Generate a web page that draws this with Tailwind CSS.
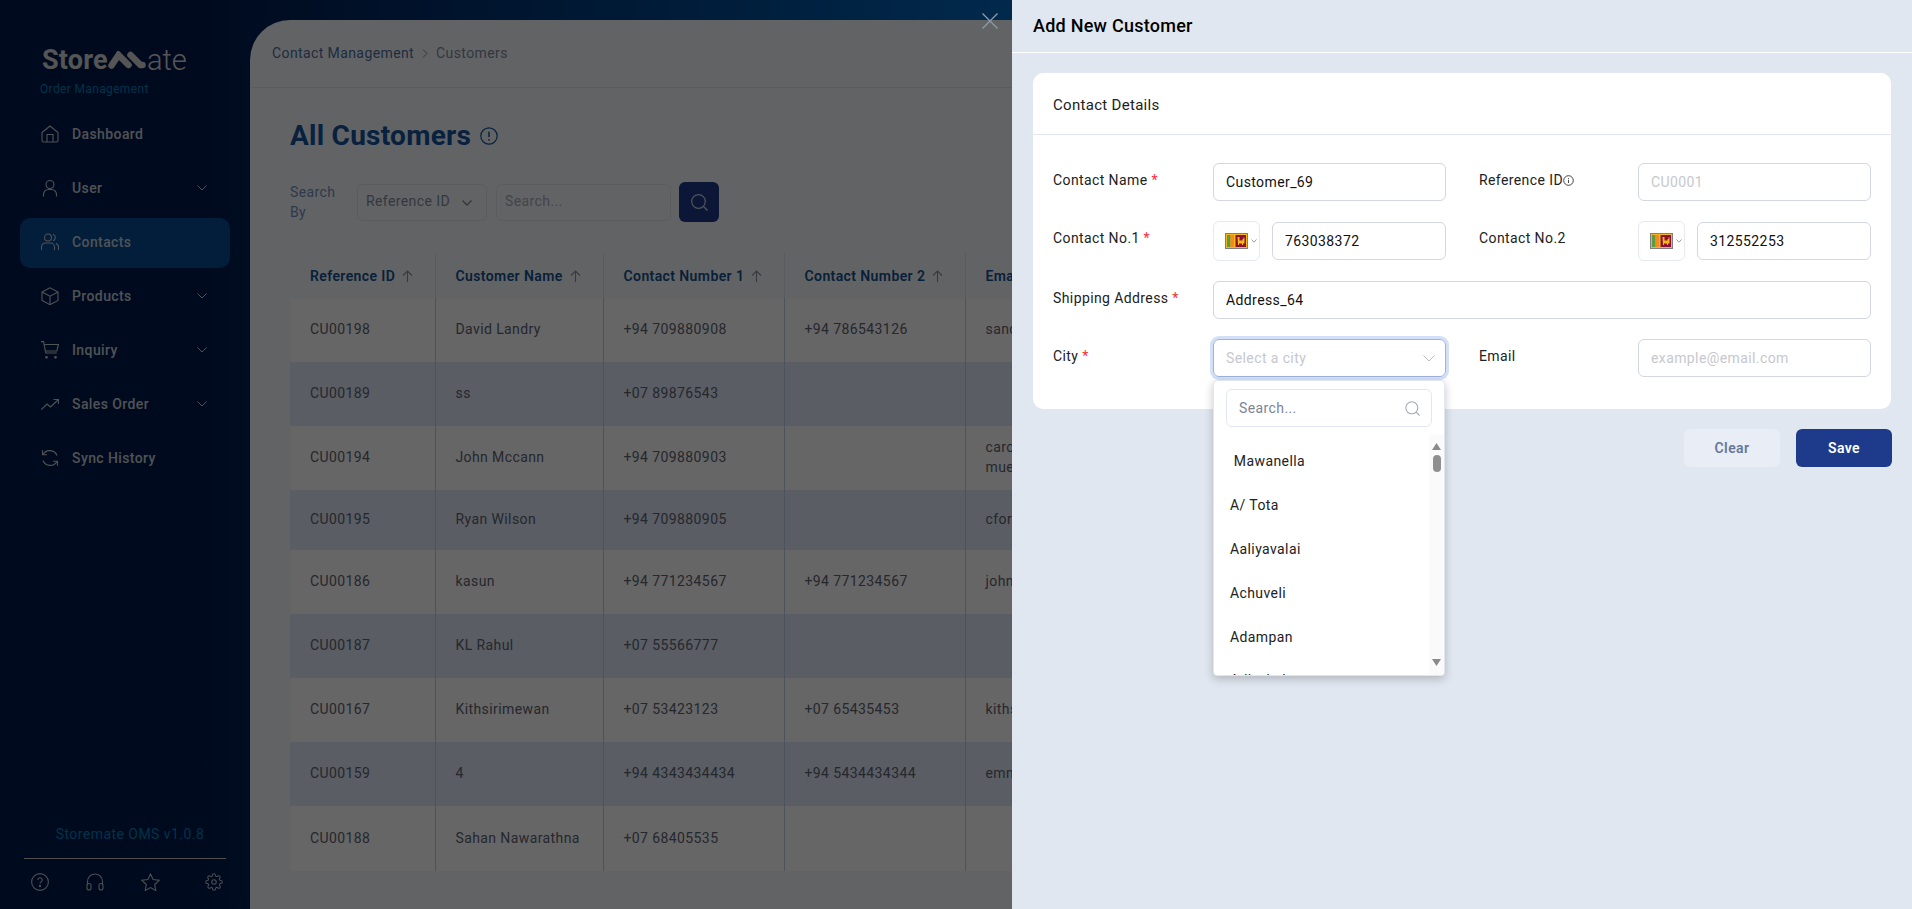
<!DOCTYPE html>
<html lang="en">

<head>
    <meta charset="UTF-8">
    <meta name="viewport" content="width=device-width, initial-scale=1.0">
    <title>Storemate OMS - Customers</title>
    <script src="https://cdn.jsdelivr.net/npm/@tailwindcss/browser@4"></script>
</head>

<body class="font-['Roboto',sans-serif] text-sm tracking-[0.4px]">
    <div class="relative w-[1912px] h-[909px] overflow-hidden bg-linear-to-r from-[#001a4c] from-[10%] to-[#0568c0] to-[53%] flex">

        <!-- sidebar -->
        <aside class="w-[250px] shrink-0 h-full flex flex-col text-[#c9cdd4] font-medium">
            <div class="pl-[42px] pt-[44px] h-[110px]">
                <div class="flex items-center h-[32px] text-[#d4d5d8]">
                    <span class="text-[27px] font-bold tracking-[0.2px] leading-none">Store</span>
                    <svg class="w-[38px] h-[18px] shrink-0" viewBox="0 0 38 18" fill="none" stroke="#d4d5d8" stroke-linecap="round" stroke-width="6.500">
                        <path d="M3.500 14.500 L10.500 4 L20.500 14" />
                        <path d="M22.500 4 L32.500 14 L34.500 14" />
                    </svg>
                    <span class="text-[29px] font-light tracking-normal leading-none ml-px">ate</span>
                </div>
                <div class="-ml-0.5 mt-[5px] text-xs font-normal text-[#007fb8] tracking-[0.35px]">Order Management</div>
            </div>
            <nav class="px-5 flex flex-col gap-[4px]">
                <a class="h-[50px] flex items-center pl-[21px] pr-[23px] pb-[2px] gap-[13px]">
                    <svg class="w-[18px] h-[18px]" viewBox="0 0 18 18" fill="none" stroke="currentColor" stroke-width="1.1"><path d="M1 7.500 9 1l8 6.500V15.500a1.500 1.500 0 0 1-1.500 1.500h-13A1.500 1.500 0 0 1 1 15.500Z" /><path d="M6 17v-7.500h6V17" /></svg>
                    <span>Dashboard</span>
                </a>
                <a class="h-[50px] flex items-center pl-[21px] pr-[23px] pb-[2px] gap-[13px]">
                    <svg class="w-[18px] h-[18px]" viewBox="0 0 18 18" fill="none" stroke="currentColor" stroke-width="1.1"><circle cx="9" cy="5.500" r="4" /><path d="M2.500 17.500v-2a5 5 0 0 1 5-5h3a5 5 0 0 1 5 5v2" /></svg>
                    <span>User</span>
                    <svg class="ml-auto w-[10px] h-[6px]" viewBox="0 0 10 6" fill="none" stroke="currentColor" stroke-width="1"><path d="M.5.500 5 5 9.500.500" /></svg>
                </a>
                <a class="h-[50px] flex items-center pl-[21px] pr-[23px] pb-[2px] gap-[13px] bg-[#054b94] rounded-[10px]">
                    <svg class="w-[18px] h-[18px]" viewBox="0 0 18 18" fill="none" stroke="currentColor" stroke-width="1.1"><circle cx="7" cy="4.500" r="3.500" /><path d="M.5 17v-3a4 4 0 0 1 4-4h5a4 4 0 0 1 4 4v3" /><path d="M12 1.200a3.500 3.500 0 0 1 0 6.600M15 10.500a4 4 0 0 1 2.500 3.500v3" /></svg>
                    <span>Contacts</span>
                </a>
                <a class="h-[50px] flex items-center pl-[21px] pr-[23px] pb-[2px] gap-[13px]">
                    <svg class="w-[18px] h-[18px]" viewBox="0 0 18 18" fill="none" stroke="currentColor" stroke-width="1.1"><path d="M9 .8 1 5v8.500l8 4.200 8-4.200V5Z" /><path d="M1 5l8 4.200L17 5M9 9.200v8.500" /></svg>
                    <span>Products</span>
                    <svg class="ml-auto w-[10px] h-[6px]" viewBox="0 0 10 6" fill="none" stroke="currentColor" stroke-width="1"><path d="M.5.500 5 5 9.500.500" /></svg>
                </a>
                <a class="h-[50px] flex items-center pl-[21px] pr-[23px] pb-[2px] gap-[13px]">
                    <svg class="w-[18px] h-[18px]" viewBox="0 0 18 18" fill="none" stroke="currentColor" stroke-width="1.1"><path d="M0 .6h2.500l2.300 11.400h11" /><path d="M3.200 3.500h14.300l-1.700 6.500H4.400" /><circle cx="5.500" cy="16.300" r=".8" fill="currentColor" /><circle cx="14.500" cy="16.300" r=".8" fill="currentColor" /></svg>
                    <span>Inquiry</span>
                    <svg class="ml-auto w-[10px] h-[6px]" viewBox="0 0 10 6" fill="none" stroke="currentColor" stroke-width="1"><path d="M.5.500 5 5 9.500.500" /></svg>
                </a>
                <a class="h-[50px] flex items-center pl-[21px] pr-[23px] pb-[2px] gap-[13px]">
                    <svg class="w-[18px] h-[18px]" viewBox="0 0 18 18" fill="none" stroke="currentColor" stroke-width="1.1"><path d="M.3 14.500 6 9l3.500 3L17.500 4.500" /><path d="M12.500 4.500h5v4.500" /></svg>
                    <span>Sales Order</span>
                    <svg class="ml-auto w-[10px] h-[6px]" viewBox="0 0 10 6" fill="none" stroke="currentColor" stroke-width="1"><path d="M.5.500 5 5 9.500.500" /></svg>
                </a>
                <a class="h-[50px] flex items-center pl-[21px] pr-[23px] pb-[2px] gap-[13px]">
                    <svg class="w-[18px] h-[18px]" viewBox="0 0 18 18" fill="none" stroke="currentColor" stroke-width="1.1"><path d="M2 5.500A7.800 7.800 0 0 1 16 6.500" /><path d="M1.500 1.200v4.500h4.500" /><path d="M16 12.500A7.800 7.800 0 0 1 2 11.500" /><path d="M16.500 16.800v-4.500H12" /></svg>
                    <span>Sync History</span>
                </a>
            </nav>
            <div class="mt-auto">
                <div class="text-center pl-[10px] text-[#007fb8] font-normal tracking-[0.45px] mb-[14px] leading-5">Storemate OMS v1.0.8</div>
                <div class="mx-[24px] border-t border-[#c8c8c8]"></div>
                <div class="flex items-center h-[50px] pl-[31px] text-[#c0c3c8] pb-[5px]">
                    <svg class="w-[18px] h-[18px] mr-[37px]" viewBox="0 0 18 18" fill="none" stroke="currentColor" stroke-width="1.1"><circle cx="9" cy="9" r="8.400" /><path d="M6.800 7a2.200 2.200 0 1 1 3.300 1.900c-.7.400-1.100.9-1.100 1.700" /><circle cx="9" cy="13" r=".6" fill="currentColor" /></svg>
                    <svg class="w-[18px] h-[18px] mr-[37px]" viewBox="0 0 18 18" fill="none" stroke="currentColor" stroke-width="1.1"><path d="M1.500 12V8.500a7.500 7.500 0 0 1 15 0V12" /><rect x="1" y="10.500" width="4" height="6.500" rx="2" /><rect x="13" y="10.500" width="4" height="6.500" rx="2" /></svg>
                    <svg class="w-[19px] h-[18px] mr-[45px]" viewBox="0 0 19 18" fill="none" stroke="currentColor" stroke-width="1.1"><path d="M9.500 1l2.600 5.500 6 .8-4.400 4.200 1.100 6-5.300-2.900-5.300 2.900 1.100-6L.9 7.300l6-.8Z" /></svg>
                    <svg class="w-[18px] h-[18px]" viewBox="0 0 24 24" fill="none" stroke="currentColor" stroke-width="1.400"><circle cx="12" cy="12" r="3" /><path d="M19.400 15a1.650 1.650 0 0 0 .33 1.820l.06.060a2 2 0 1 1-2.830 2.830l-.06-.060a1.650 1.650 0 0 0-2.800 1.170V21a2 2 0 0 1-4 0v-.090a1.650 1.650 0 0 0-2.800-1.170l-.06.060a2 2 0 1 1-2.830-2.830l.06-.060a1.650 1.650 0 0 0-1.170-2.800H3a2 2 0 0 1 0-4h.090a1.650 1.650 0 0 0 1.170-2.800l-.06-.060a2 2 0 1 1 2.830-2.830l.06.060a1.650 1.650 0 0 0 2.800-1.170V3a2 2 0 0 1 4 0v.090a1.650 1.650 0 0 0 2.800 1.170l.06-.060a2 2 0 1 1 2.830 2.830l-.06.060a1.650 1.650 0 0 0 1.170 2.800H21a2 2 0 0 1 0 4h-.090a1.650 1.650 0 0 0-1.510 1Z" /></svg>
                </div>
            </div>
        </aside>

        <!-- main content -->
        <main class="flex-1 mt-5 bg-[#f5f8fc] rounded-tl-[40px] overflow-hidden">
            <div class="pl-[22px] ml-px h-[68px] border-b border-[#e3e6ea] flex items-center pb-px gap-[8px]">
                <span class="-ml-px text-[#4f6f9f]">Contact Management</span>
                <svg class="w-[6px] h-[9px]" viewBox="0 0 6 9" fill="none" stroke="#7f8ea5" stroke-width="1"><path d="M1 .5 5 4.500 1 8.500" /></svg>
                <span class="text-[#7d8ca2]">Customers</span>
            </div>
            <div class="pl-[40px]">
                <div class="flex items-center gap-[9px] mt-[28px] h-[40px]">
                    <h1 class="text-[28px] font-bold text-[#12539c] tracking-[0.25px]">All Customers</h1>
                    <svg class="w-[18px] h-[18px]" viewBox="0 0 18 18" fill="none" stroke="#12539c" stroke-width="1.200"><circle cx="9" cy="9" r="8.200" /><path d="M9 4.800v5.200" stroke-width="1.500" /><circle cx="9" cy="12.800" r=".9" fill="#12539c" stroke="none" /></svg>
                </div>
                <div class="flex items-center mt-[26px] h-[40px]">
                    <span class="w-[67px] text-[#7290bd] leading-5">Search<br>By</span>
                    <div class="w-[130px] h-[37px] border border-[#e2e6ec] rounded-[6px] flex items-center pl-[8px] pr-[14px] pb-[2px] justify-between text-[#838d9c]">
                        <span>Reference ID</span>
                        <svg class="w-[10px] h-[6px] mt-[3px]" viewBox="0 0 10 6" fill="none" stroke="#7f8894" stroke-width="1.400"><path d="M.5.500 5 5 9.500.500" /></svg>
                    </div>
                    <div class="ml-[9px] w-[175px] h-[37px] border border-[#e2e6ec] rounded-[6px] flex items-center pl-[8px] pb-[2px] text-[#a4adba]">Search...</div>
                    <button class="ml-[8px] w-[40px] h-[40px] bg-[#1e3a8a] rounded-[6px] flex items-center justify-center">
                        <svg class="w-[17px] h-[17px]" viewBox="0 0 17 17" fill="none" stroke="#c9d3e6" stroke-width="1.200"><circle cx="7.500" cy="7.500" r="6.800" /><path d="m12.500 12.500 4 4" /></svg>
                    </button>
                </div>
                <table class="mt-[31px] border-collapse table-fixed w-[900px] text-[#5c6472]">
                    <thead class="text-[#14508f] text-left">
                        <tr class="h-[45px] [&>th]:pl-5 [&>th]:border-r [&>th]:border-[#dde4ee] [&>th]:font-semibold">
                            <th class="w-[145px]"><span class="flex items-center gap-[7px]">Reference ID <svg class="w-[11px] h-[12px]" viewBox="0 0 11 12" fill="none" stroke="#8a9098" stroke-width="1.100"><path d="M5.500 12V1M1 5.500 5.500 1 10 5.500" /></svg></span></th>
                            <th class="w-[168px]"><span class="flex items-center gap-[7px]">Customer Name <svg class="w-[11px] h-[12px]" viewBox="0 0 11 12" fill="none" stroke="#8a9098" stroke-width="1.100"><path d="M5.500 12V1M1 5.500 5.500 1 10 5.500" /></svg></span></th>
                            <th class="w-[181px]"><span class="flex items-center gap-[7px]">Contact Number 1 <svg class="w-[11px] h-[12px]" viewBox="0 0 11 12" fill="none" stroke="#8a9098" stroke-width="1.100"><path d="M5.500 12V1M1 5.500 5.500 1 10 5.500" /></svg></span></th>
                            <th class="w-[181px]"><span class="flex items-center gap-[7px]">Contact Number 2 <svg class="w-[11px] h-[12px]" viewBox="0 0 11 12" fill="none" stroke="#8a9098" stroke-width="1.100"><path d="M5.500 12V1M1 5.500 5.500 1 10 5.500" /></svg></span></th>
                            <th class="w-[225px] !border-r-0">Email</th>
                        </tr>
                    </thead>
                    <tbody class="[&_td]:pl-5 [&_td]:pb-[2px] [&_td]:border-r [&_td]:border-[#bccfe9] [&_tr:nth-child(even)]:bg-[#e1e9f8] [&_tr:nth-child(odd)]:bg-white">
                        <tr class="h-[64px]"><td>CU00198</td><td>David Landry</td><td>+94 709880908</td><td>+94 786543126</td><td>sandra41@example.net</td></tr>
                        <tr class="h-[64px]"><td>CU00189</td><td>ss</td><td>+07 89876543</td><td></td><td></td></tr>
                        <tr class="h-[64px]"><td>CU00194</td><td>John Mccann</td><td>+94 709880903</td><td></td><td class="leading-5">carolyn.<br>mueller@example.org</td></tr>
                        <tr class="h-[60px]"><td>CU00195</td><td>Ryan Wilson</td><td>+94 709880905</td><td></td><td>cford@example.com</td></tr>
                        <tr class="h-[64px]"><td>CU00186</td><td>kasun</td><td>+94 771234567</td><td>+94 771234567</td><td>john@example.com</td></tr>
                        <tr class="h-[64px]"><td>CU00187</td><td>KL Rahul</td><td>+07 55566777</td><td></td><td></td></tr>
                        <tr class="h-[64px]"><td>CU00167</td><td>Kithsirimewan</td><td>+07 53423123</td><td>+07 65435453</td><td>kithsiri@example.com</td></tr>
                        <tr class="h-[64px]"><td>CU00159</td><td>4</td><td>+94 4343434434</td><td>+94 5434434344</td><td>emma@example.com</td></tr>
                        <tr class="h-[65px]"><td>CU00188</td><td>Sahan Nawarathna</td><td>+07 68405535</td><td></td><td></td></tr>
                    </tbody>
                </table>
            </div>
        </main>

        <!-- modal backdrop -->
        <div class="absolute inset-0 bg-black/60"></div>

        <!-- close button -->
        <button class="absolute left-[982px] top-[13px] w-[16px] h-[16px]">
            <svg class="w-[16px] h-[16px]" viewBox="0 0 16 16" fill="none" stroke="#8f9cac" stroke-width="1.300"><path d="M.5.500l15 15M15.500.500l-15 15" /></svg>
        </button>

        <!-- add customer drawer -->
        <section class="absolute right-0 top-0 w-[900px] h-full bg-[#e1e7f0] text-[#222]">
            <div class="h-[53px] border-b border-white pl-[21px] pt-[16px]">
                <h2 class="text-[18px] tracking-[0.25px] font-medium text-black leading-5">Add New Customer</h2>
            </div>
            <div class="mx-[21px] mt-5">
                <div class="bg-white rounded-[10px] h-[336px]">
                    <div class="h-[62px] border-b border-[#e1e7f0] pl-5 pt-[5px] flex items-center text-[15px] tracking-[0.3px]">Contact Details</div>
                    <div class="grid grid-cols-[160px_233px_192px_233px] gap-y-5 items-start px-5 pt-[28px]">
                        <label class="pt-[7px] leading-5">Contact Name <span class="text-red-500">*</span></label>
                        <input value="Customer_69" class="h-[38px] w-full px-3 border border-[#d3d6e3] rounded-[6px] text-[#111] outline-none">
                        <label class="pt-[7px] pl-[33px] leading-5 flex items-center">Reference ID<svg class="w-[11px] h-[11px]" viewBox="0 0 11 11" fill="none" stroke="#333" stroke-width=".9"><circle cx="5.500" cy="5.500" r="4.800" /><path d="M5.500 4.800v3.200M5.500 3v.9" /></svg></label>
                        <input placeholder="CU0001" class="h-[38px] w-full px-3 border border-[#d3d6e3] rounded-[6px] outline-none placeholder:text-[#c6c8ce]">

                        <label class="pt-[7px] leading-5">Contact No.1 <span class="text-red-500">*</span></label>
                        <div class="flex items-center h-10">
                            <div class="w-[47px] h-10 border border-[#e6e9f2] rounded-[6px] flex items-center pl-[11px] gap-[3px]">
                                <svg class="w-[23px] h-[16px] shrink-0" viewBox="0 0 23 16"><rect width="23" height="16" fill="#7f7f7f" /><rect x="1" y="1" width="21" height="14" fill="#f5b81c" /><rect x="2" y="2" width="3.500" height="12" fill="#5f9b3c" /><rect x="5.500" y="2" width="3.500" height="12" fill="#f28c1e" /><rect x="10.500" y="2" width="10.500" height="12" fill="#8e1230" /><path d="M12.500 4h2v3.500h3V6h1v-1.500h1v6h-1.500v1.500h-1v-1.500h-3v1.500h-1Z" fill="#f5b81c" /></svg>
                                <svg class="w-[6px] h-[4px] shrink-0" viewBox="0 0 6 4" fill="none" stroke="#8a8f99" stroke-width=".9"><path d="M.5.500 3 3.200 5.500.500" /></svg>
                            </div>
                            <input value="763038372" class="ml-3 flex-1 min-w-0 h-[38px] px-3 border border-[#d3d6e3] rounded-[6px] text-[#111] outline-none">
                        </div>
                        <label class="pt-[7px] pl-[33px] leading-5">Contact No.2</label>
                        <div class="flex items-center h-10">
                            <div class="w-[47px] h-10 border border-[#e6e9f2] rounded-[6px] flex items-center pl-[11px] gap-[3px]">
                                <svg class="w-[23px] h-[16px] shrink-0" viewBox="0 0 23 16"><rect width="23" height="16" fill="#7f7f7f" /><rect x="1" y="1" width="21" height="14" fill="#f5b81c" /><rect x="2" y="2" width="3.500" height="12" fill="#5f9b3c" /><rect x="5.500" y="2" width="3.500" height="12" fill="#f28c1e" /><rect x="10.500" y="2" width="10.500" height="12" fill="#8e1230" /><path d="M12.500 4h2v3.500h3V6h1v-1.500h1v6h-1.500v1.500h-1v-1.500h-3v1.500h-1Z" fill="#f5b81c" /></svg>
                                <svg class="w-[6px] h-[4px] shrink-0" viewBox="0 0 6 4" fill="none" stroke="#8a8f99" stroke-width=".9"><path d="M.5.500 3 3.200 5.500.500" /></svg>
                            </div>
                            <input value="312552253" class="ml-3 flex-1 min-w-0 h-[38px] px-3 border border-[#d3d6e3] rounded-[6px] text-[#111] outline-none">
                        </div>

                        <label class="pt-[7px] leading-5">Shipping Address <span class="text-red-500">*</span></label>
                        <input value="Address_64" class="col-span-3 h-[38px] w-full px-3 border border-[#d3d6e3] rounded-[6px] text-[#111] outline-none">

                        <label class="pt-[7px] leading-5">City <span class="text-red-500">*</span></label>
                        <div class="relative">
                            <div class="h-[38px] border border-[#9fb2dc] ring-[3px] ring-[#d3e0f8] rounded-[6px] flex items-center justify-between pl-3 pr-[10px] text-[#c6c8ce]">
                                <span>Select a city</span>
                                <svg class="w-[12px] h-[7px]" viewBox="0 0 12 7" fill="none" stroke="#b8bcc6" stroke-width="1"><path d="M.5.500 6 6 11.500.500" /></svg>
                            </div>
                            <!-- city dropdown -->
                            <div class="absolute left-0 top-[41px] z-10 w-[232px] h-[296px] bg-white rounded-[4px] shadow-[0_3px_10px_rgba(0,0,0,0.22)] border border-[#e1e7f0] overflow-hidden">
                                <div class="mx-[12px] mt-[8px] h-[38px] border border-[#e1e7f0] rounded-[6px] flex items-center justify-between pl-3 pr-[11px] text-[#7d8494]">
                                    <span>Search...</span>
                                    <svg class="w-[15px] h-[15px]" viewBox="0 0 15 15" fill="none" stroke="#a3a9b5" stroke-width="1.100"><circle cx="6.800" cy="6.800" r="6" /><path d="m11.200 11.200 3.300 3.300" /></svg>
                                </div>
                                <div class="absolute left-0 right-[16px] top-[58px] text-[#222] [&>div]:h-[44px] [&>div]:flex [&>div]:items-center [&>div]:pl-[16px]">
                                    <div>&nbsp;Mawanella</div>
                                    <div>A/ Tota</div>
                                    <div>Aaliyavalai</div>
                                    <div>Achuveli</div>
                                    <div>Adampan</div>
                                    <div class="-mt-[1px]">Adiyakulam</div>
                                </div>
                                <div class="absolute right-0 top-[54px] bottom-0 w-[15px] bg-[#fafafa] flex flex-col items-center">
                                    <svg class="w-[9px] h-[7px] mt-[8px]" viewBox="0 0 9 7"><path d="M4.500 0 9 7H0Z" fill="#8a8a8a" /></svg>
                                    <div class="w-[8px] h-[17px] mt-[5px] rounded-full bg-[#8f8f8f]"></div>
                                    <svg class="w-[9px] h-[7px] mt-auto mb-[9px]" viewBox="0 0 9 7"><path d="M0 0H9L4.500 7Z" fill="#8a8a8a" /></svg>
                                </div>
                            </div>
                        </div>
                        <label class="pt-[7px] pl-[33px] leading-5">Email</label>
                        <input placeholder="example@email.com" class="h-[38px] w-full px-3 border border-[#d3d6e3] rounded-[6px] outline-none placeholder:text-[#c6c8ce]">
                    </div>
                </div>
                <div class="flex justify-end gap-4 mt-[20px] -mr-px font-semibold">
                    <button class="w-[96px] h-[38px] rounded-[6px] bg-[#e9eef6] text-[#66789a]">Clear</button>
                    <button class="w-[96px] h-[38px] rounded-[6px] bg-[#1e3a8a] text-white">Save</button>
                </div>
            </div>
        </section>
    </div>
</body>

</html>
